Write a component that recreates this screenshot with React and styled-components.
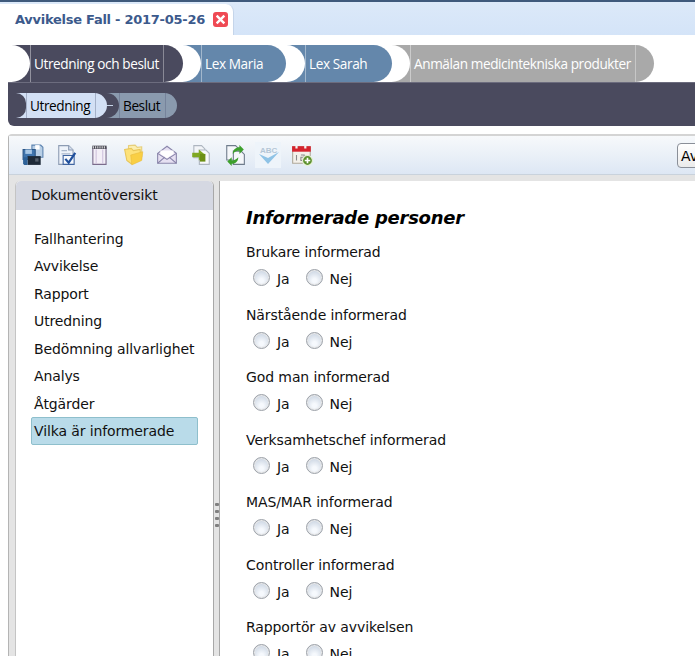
import styled, { createGlobalStyle } from "styled-components";

const GlobalStyle = createGlobalStyle`
  html, body {
    margin: 0;
    padding: 0;
    height: 100%;
    overflow: hidden;
    background: #fff;
    font-family: "DejaVu Sans", Verdana, sans-serif;
  }
`;

const Page = styled.div`
  width: 695px;
  height: 656px;
  overflow: hidden;
`;

const TopStrip = styled.div`
  height: 2px;
  background: #3f5a7c;
`;

const TabBar = styled.div`
  height: 33px;
  display: flex;
  align-items: flex-end;
  background: linear-gradient(#dce9f9, #d4e4f8);
`;

const Tab = styled.div`
  width: 234px;
  height: 31px;
  box-sizing: border-box;
  padding-left: 15px;
  display: flex;
  align-items: center;
  gap: 8px;
  background: #fff;
  border-top-right-radius: 8px;
  border-right: 1px solid #c5d5ea;
  color: #3c5a8c;
  font-size: 13px;
  font-weight: bold;
  white-space: nowrap;
  letter-spacing: -0.02em;
`;

const CloseBox = styled.span`
  width: 15px;
  height: 15px;
  border-radius: 3px;
  background: #ef4a54;
  color: #fff;
  display: flex;
  align-items: center;
  justify-content: center;
`;

const StepRow = styled.div`
  display: flex;
  height: 37px;
  margin-top: 10px;
`;

const Step = styled.div`
  position: relative;
  z-index: ${(p) => p.$layer};
  margin-left: ${(p) => p.$overlap}px;
  padding-left: ${(p) => p.$cap}px;
  width: ${(p) => p.$width}px;
  box-sizing: border-box;
  display: flex;
  align-items: stretch;
  background: ${(p) => p.$color};
  border-radius: 0 19px 19px 0;
  color: #fff;
  font-family: "Open Sans", "DejaVu Sans", sans-serif;
  font-size: 13.6px;
  white-space: nowrap;

  &::before {
    content: "";
    position: absolute;
    left: 0;
    top: 0;
    bottom: 0;
    width: ${(p) => p.$cap}px;
    background: #fff;
    border-radius: 0 19px 19px 0;
  }
`;

const StepLabel = styled.span`
  flex: ${(p) => (p.$grow ? 1 : "none")};
  display: flex;
  align-items: center;
  padding-left: 3px;
  border-left: 1px solid rgba(255, 255, 255, 0.4);
  letter-spacing: -0.4px;
`;

const StepEnd = styled.span`
  width: ${(p) => p.$width}px;
  border-left: 1px solid rgba(255, 255, 255, 0.35);
`;

const SubBar = styled.div`
  height: 44px;
  margin-left: 8px;
  padding: 10px 0 0 8px;
  box-sizing: border-box;
  display: flex;
  background: #4a4a5e;
  border-top: 1px solid #6c6c7e;
  border-bottom-left-radius: 6px;
`;

const SubStep = styled.div`
  position: relative;
  z-index: ${(p) => p.$layer};
  width: ${(p) => p.$width}px;
  height: 25px;
  margin-left: ${(p) => p.$overlap}px;
  padding-left: ${(p) => p.$cap}px;
  box-sizing: border-box;
  display: flex;
  background: ${(p) => p.$color};
  border-radius: 0 13px 13px 0;
  color: #000;
  font-family: "Open Sans", "DejaVu Sans", sans-serif;
  font-size: 13.6px;

  &::before {
    content: "";
    position: absolute;
    left: 0;
    top: 0;
    bottom: 0;
    width: ${(p) => p.$cap}px;
    background: #4a4a5e;
    border-radius: 0 13px 13px 0;
  }
`;

const Connector = styled.span`
  position: absolute;
  left: 0;
  top: 12px;
  width: 12px;
  height: 1px;
  background: #c8d6ea;
`;

const SubLabel = styled.span`
  display: flex;
  align-items: center;
  padding: 0 5px 0 3px;
  border-left: 1px solid rgba(80, 90, 120, 0.35);
  border-right: 1px solid rgba(80, 90, 120, 0.35);
  letter-spacing: -0.4px;
`;

const Workspace = styled.div`
  margin: 8px 0 0 8px;
  background: #e4e4e4;
  border-top: 2px solid #d4d4d4;
  border-left: 1px solid #b4b4b4;
  border-top-left-radius: 4px;
`;

const Toolbar = styled.div`
  height: 39px;
  box-sizing: border-box;
  position: relative;
  display: flex;
  align-items: center;
  padding-left: 11px;
  gap: 7.6px;
  background: linear-gradient(#f7f9fb, #dde7f4);
  border-bottom: 1px solid #c9d2dc;
`;

const ToolButton = styled.span`
  width: 26px;
  height: 26px;
  display: flex;
  align-items: center;
  justify-content: center;
  background: ${(p) => (p.$active ? "#eef4fa" : "transparent")};
`;

const EdgeButton = styled.button`
  position: absolute;
  left: 668px;
  top: 7px;
  width: 60px;
  height: 25px;
  padding: 0 0 0 3px;
  text-align: left;
  background: linear-gradient(#fff, #ebebeb);
  border: 1px solid #8a8f98;
  border-radius: 4px;
  font-family: inherit;
  font-size: 14px;
  color: #000;
`;

const Body = styled.div`
  display: flex;
  padding: 6px 0 0 6px;
  height: 668px;
`;

const Sidebar = styled.aside`
  width: 199px;
  flex: none;
  box-sizing: border-box;
  background: #fff;
  border-right: 1px solid #a8a8a8;
  border-left: 1px solid #c4c4c4;
  border-radius: 5px 5px 0 0;
`;

const SideHeading = styled.div`
  height: 29px;
  padding: 6px 0 0 15px;
  box-sizing: border-box;
  background: #d5d8e2;
  border-radius: 5px 5px 0 0;
  font-size: 14px;
  letter-spacing: -0.12px;
  color: #111;
`;

const SideList = styled.div`
  display: flex;
  flex-direction: column;
  padding: 15px 15px 0 15px;
`;

const SideItem = styled.div`
  height: 27.5px;
  box-sizing: border-box;
  display: flex;
  align-items: center;
  padding-left: 3px;
  font-size: 14px;
  letter-spacing: -0.12px;
  color: #111;
  white-space: nowrap;
  border-radius: 2px;
  ${(p) =>
    p.$selected &&
    `background: #b9dbe9;
     border: 1px solid #8ebfcc;
     padding-left: 2px;
     margin-top: -0.5px;
     height: 28px;`}
`;

const Splitter = styled.div`
  width: 6px;
  flex: none;
  display: flex;
  flex-direction: column;
  justify-content: center;
  align-items: center;
  gap: 4px;
  box-sizing: border-box;
  border-right: 1px solid #a8a8a8;
`;

const GripDot = styled.span`
  width: 4px;
  height: 3px;
  border-radius: 1px;
  background: #808080;
`;

const Content = styled.main`
  flex: 1;
  background: #fff;
  padding: 26px 0 0 26px;
`;

const Title = styled.h2`
  margin: 0 0 14px;
  font-size: 18px;
  line-height: 22px;
  font-weight: bold;
  font-style: italic;
  letter-spacing: -0.25px;
  color: #000;
`;

const Question = styled.div`
  height: 62.5px;
  font-size: 14px;
  letter-spacing: -0.1px;
  color: #111;
`;

const QuestionLabel = styled.div`
  height: 19px;
  line-height: 19px;
  white-space: nowrap;
`;

const Options = styled.div`
  display: flex;
  align-items: center;
  padding: 7px 0 0 7px;
`;

const Radio = styled.span`
  width: 17px;
  height: 17px;
  margin-top: -2px;
  box-sizing: border-box;
  border-radius: 50%;
  border: 1px solid #9ca1a8;
  box-shadow: inset 0 0 0 1px #e8e8e8;
  background: radial-gradient(circle at 50% 70%, #f6f9fd 15%, #cbd5e2 80%);
`;

const OptionText = styled.span`
  margin: 0 16px 0 7px;
  line-height: 19px;
  position: relative;
  top: 1px;
`;

const IconSave = () => (
  <svg width="22" height="22" viewBox="0 0 20 20">
    <path d="M9 1h8l2 2v9H9z" fill="#b8cfe6" stroke="#5d84b0" />
    <path d="M12 1h4v4h-4z" fill="#fff" />
    <path d="M1 5h11v9H1z" fill="#3f74ad" stroke="#2b5687" />
    <path d="M3 5h6v4H3z" fill="#a9c8e6" />
    <path d="M5 11h12v8H5z" fill="#1e2a38" />
    <path d="M1 12h4v7H2l-1-1z" fill="#2e6299" />
    <path d="M12 13h3v3h-3z" fill="#55606c" />
  </svg>
);

const IconCheckDoc = () => (
  <svg width="22" height="22" viewBox="0 0 20 20">
    <path d="M2.5 1.5h9l4 4v13h-13z" fill="#eef3fa" stroke="#8d9cb3" />
    <path d="M11.5 1.5v4h4" fill="#d5dfee" stroke="#8d9cb3" />
    <path d="M5 6h5M5 9h8" stroke="#aab8cc" />
    <path d="M6.5 10.5h10v8h-10z" fill="#f6f9fd" stroke="#3f64a0" />
    <path d="M8.5 13.5l3 3.5 6-9" fill="none" stroke="#1f4f9c" strokeWidth="2" />
  </svg>
);

const IconNotepad = () => (
  <svg width="22" height="22" viewBox="0 0 20 20">
    <path d="M3.5 3.5h12v15h-12z" fill="#f3eff7" stroke="#7b6c8c" />
    <path d="M3 1.5h13v3H3z" fill="#4c4c58" />
    <path d="M4 2v2M6 2v2M8 2v2M10 2v2M12 2v2M14 2v2" stroke="#d8d8d8" />
    <path d="M6.5 5v13M12.5 5v13" stroke="#cfc3dc" />
  </svg>
);

const IconFolders = () => (
  <svg width="22" height="22" viewBox="0 0 20 20">
    <path d="M5 1.5l6-.5 2 2 4-.5v9l-12 2z" fill="#fbeeb0" stroke="#e6cf7c" />
    <path d="M1.5 5l6-1 2 2 6-1 1 9-9 4-4-3z" fill="#fde27a" stroke="#e8c65a" />
    <path d="M7 10l11-3-1 8-9 4z" fill="#f9cf45" stroke="#e8b93a" strokeWidth=".5" />
  </svg>
);

const IconEnvelope = () => (
  <svg width="22" height="22" viewBox="0 0 20 20">
    <path d="M1.5 8.5L10 2l8.5 6.5v9h-17z" fill="#e6e0f2" stroke="#8a86ab" />
    <path d="M4 9V6h12v3l-6 4z" fill="#fff" />
    <path d="M1.5 8.5L10 14l8.5-5.5M1.5 17.5L8 12M18.5 17.5L12 12" fill="none" stroke="#8a86ab" />
  </svg>
);

const IconMoveDoc = () => (
  <svg width="22" height="22" viewBox="0 0 20 20">
    <path d="M3.5 1.5h7l3 3v8h-10z" fill="#f3f5f8" stroke="#aeb6c0" />
    <path d="M8.5 5.5h6l3 3v10h-9z" fill="#f8f9fb" stroke="#aeb6c0" />
    <path d="M2 8h6V5l6 5-6 5v-3H2z" fill="#7fa821" />
    <path d="M9 9h5v7H9z" fill="#6c8f14" />
  </svg>
);

const IconSyncDoc = () => (
  <svg width="22" height="22" viewBox="0 0 20 20">
    <path d="M2.5 1.5h8l3 3v10h-11z" fill="#f5f7fa" stroke="#6f7c8c" />
    <path d="M8.5 6.5h7l3 3v9h-10z" fill="#f5f7fa" stroke="#6f7c8c" />
    <path d="M8 9c0-4 3-6 6-6V1l4 4-4 4V6c-2 0-4 1-6 3z" fill="#3da02c" />
    <path d="M13 12c0 4-3 6-6 6v2l-4-4 4-4v3c2 0 4-1 6-3z" fill="#3da02c" />
  </svg>
);

const IconSpell = () => (
  <svg width="25" height="24" viewBox="0 0 25 24">
    <text x="4" y="10" fontSize="8" fontWeight="bold" fontFamily="Liberation Sans, sans-serif" fill="#b4c6d6">ABC</text>
    <path d="M3 11l9 10 11-12-11 6z" fill="#8fc3e6" />
  </svg>
);

const IconCalendar = () => (
  <svg width="22" height="22" viewBox="0 0 20 20">
    <path d="M1.5 2.5h16v15h-16z" fill="#f4f1ea" stroke="#b0a99b" />
    <path d="M1 2h17v5H1z" fill="#d5232d" />
    <path d="M4 1h2v3H4zM12 1h2v3h-2z" fill="#f3f3f3" />
    <path d="M5 10v5M9 10h3v2H9v3h3" fill="none" stroke="#8a8a8a" />
    <circle cx="15" cy="15" r="4.5" fill="#5b8f2d" stroke="#e8f3d8" />
    <path d="M15 12.5v5M12.5 15h5" stroke="#fff" strokeWidth="1.5" />
  </svg>
);

const sideItems = [
  "Fallhantering",
  "Avvikelse",
  "Rapport",
  "Utredning",
  "Bedömning allvarlighet",
  "Analys",
  "Åtgärder",
];

const questions = [
  "Brukare informerad",
  "Närstående informerad",
  "God man informerad",
  "Verksamhetschef informerad",
  "MAS/MAR informerad",
  "Controller informerad",
  "Rapportör av avvikelsen",
];

export default function App() {
  return (
    <Page>
      <GlobalStyle />
      <TopStrip />
      <TabBar>
        <Tab>
          Avvikelse Fall - 2017-05-26
          <CloseBox>
            <svg width="11" height="11" viewBox="0 0 10 10">
              <path d="M1.5 1.5l7 7M8.5 1.5l-7 7" stroke="#fff" strokeWidth="2.2" />
            </svg>
          </CloseBox>
        </Tab>
      </TabBar>

      <StepRow>
        <Step $layer={4} $overlap={0} $cap={30} $width={183} $color="#4a4a5e">
          <StepLabel $grow>Utredning och beslut</StepLabel>
          <StepEnd $width={19} />
        </Step>
        <Step $layer={3} $overlap={-15} $cap={33} $width={118} $color="#6487ab">
          <StepLabel>Lex Maria</StepLabel>
        </Step>
        <Step $layer={2} $overlap={-14} $cap={33} $width={120} $color="#6487ab">
          <StepLabel>Lex Sarah</StepLabel>
        </Step>
        <Step $layer={1} $overlap={-15} $cap={33} $width={277} $color="#a9a9a9">
          <StepLabel $grow>Anmälan medicintekniska produkter</StepLabel>
          <StepEnd $width={18} />
        </Step>
      </StepRow>

      <SubBar>
        <SubStep $layer={2} $overlap={0} $cap={10} $width={91} $color="#d3e0f5">
          <SubLabel>Utredning</SubLabel>
        </SubStep>
        <SubStep $layer={1} $overlap={-6} $cap={18} $width={76} $color="#8a9aae">
          <Connector />
          <SubLabel>Beslut</SubLabel>
        </SubStep>
      </SubBar>

      <Workspace>
        <Toolbar>
          <ToolButton><IconSave /></ToolButton>
          <ToolButton><IconCheckDoc /></ToolButton>
          <ToolButton><IconNotepad /></ToolButton>
          <ToolButton><IconFolders /></ToolButton>
          <ToolButton><IconEnvelope /></ToolButton>
          <ToolButton><IconMoveDoc /></ToolButton>
          <ToolButton><IconSyncDoc /></ToolButton>
          <ToolButton $active><IconSpell /></ToolButton>
          <ToolButton><IconCalendar /></ToolButton>
          <EdgeButton>Avsluta</EdgeButton>
        </Toolbar>
        <Body>
          <Sidebar>
            <SideHeading>Dokumentöversikt</SideHeading>
            <SideList>
              {sideItems.map((item) => (
                <SideItem key={item}>{item}</SideItem>
              ))}
              <SideItem $selected>Vilka är informerade</SideItem>
            </SideList>
          </Sidebar>
          <Splitter>
            <GripDot />
            <GripDot />
            <GripDot />
            <GripDot />
          </Splitter>
          <Content>
            <Title>Informerade personer</Title>
            {questions.map((q) => (
              <Question key={q}>
                <QuestionLabel>{q}</QuestionLabel>
                <Options>
                  <Radio />
                  <OptionText>Ja</OptionText>
                  <Radio />
                  <OptionText>Nej</OptionText>
                </Options>
              </Question>
            ))}
          </Content>
        </Body>
      </Workspace>
    </Page>
  );
}
